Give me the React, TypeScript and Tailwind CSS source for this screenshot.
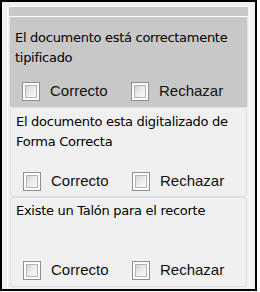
import React from "react";

function Box() {
  return (
    <div className="w-[18px] h-[19px] border border-[#8f8f8f] bg-white p-[2px] shrink-0">
      <div className="w-full h-full border border-[#b4b4b4] bg-gradient-to-br from-[#d6d6d6] via-[#ececec] to-[#fbfbfb]" />
    </div>
  );
}

function Row() {
  return (
    <div className="flex items-center h-[20px] pl-[12px]" style={{ fontFamily: '"Liberation Sans", Arial, sans-serif' }}>
      <div className="flex items-center w-[109px]">
        <Box />
        <span className="ml-[10px] text-[15px] text-[#111]">Correcto</span>
      </div>
      <Box />
      <span className="ml-[10px] text-[15px] text-[#111]">Rechazar</span>
    </div>
  );
}

function Desc({ children }: { children: React.ReactNode }) {
  return (
    <div
      className="text-[13px] leading-[20px] text-black tracking-[-0.28px] pl-[5px] pr-[4px]"
      style={{ fontFamily: '"DejaVu Sans", sans-serif' }}
    >
      {children}
    </div>
  );
}

export default function App() {
  return (
    <div className="w-[260px] h-[292px] bg-white">
      <div className="w-[257px] h-[291px] border-2 border-black bg-[#f0f0f0] pl-[5px] pt-[4px]">
        <div className="w-[243px] h-[283px] border-l border-t border-r border-[#fbfbfb] flex flex-col">
          <div className="h-[10px] bg-[#c8c8c8] mx-[1px] border-b border-white" />
          <div className="h-[90px] bg-[#c8c8c8] mx-[1px] border-l border-r border-[#e4e4e4] flex flex-col pt-[11px] pb-[6px]">
            <Desc>
              El documento está correctamente
              <br />
              tipificado
            </Desc>
            <div className="mt-auto">
              <Row />
            </div>
          </div>
          <div className="h-[90px] mx-[2px] border border-[#d8dfe7] rounded-[3px] flex flex-col pt-[4px] pb-[5px]">
            <Desc>
              El documento esta digitalizado de
              <br />
              Forma Correcta
            </Desc>
            <div className="mt-auto">
              <Row />
            </div>
          </div>
          <div className="h-[90px] mx-[2px] border border-[#d8dfe7] rounded-[3px] flex flex-col pt-[3px] pb-[6px]">
            <Desc>Existe un Talón para el recorte</Desc>
            <div className="mt-auto">
              <Row />
            </div>
          </div>
        </div>
      </div>
    </div>
  );
}
